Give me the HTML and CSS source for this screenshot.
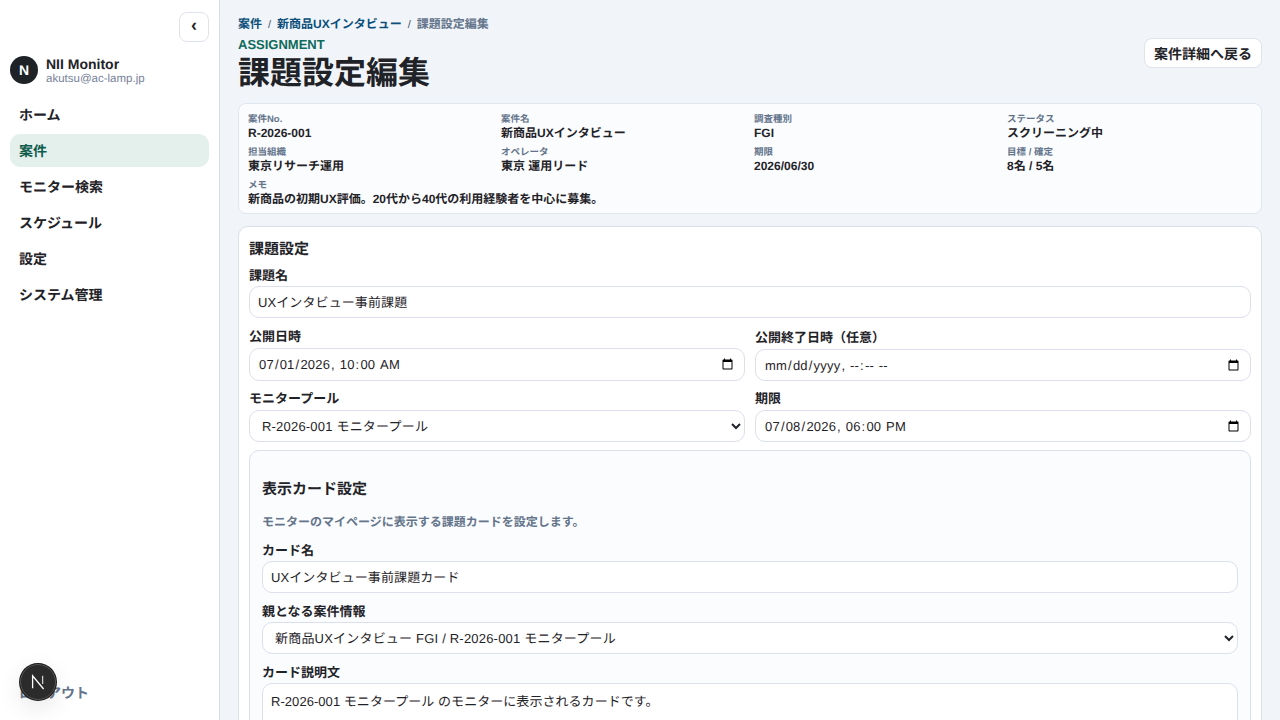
FILE: index.html
```html
<!DOCTYPE html>
<html lang="ja">
<head>
  <meta charset="utf-8"/>
  <title>課題設定編集</title>
  <link rel="stylesheet" href="styles.css">
</head>
<body>
  <aside class="sidebar">
    <div class="collapse-row">
      <button class="collapse-btn">‹</button>
    </div>
    <div class="brand">
      <div class="avatar">N</div>
      <div>
        <div class="brand-name">NII Monitor</div>
        <div class="brand-mail">akutsu@ac-lamp.jp</div>
      </div>
    </div>
    <nav class="nav">
      <a class="nav-item">ホーム</a>
      <a class="nav-item active">案件</a>
      <a class="nav-item">モニター検索</a>
      <a class="nav-item">スケジュール</a>
      <a class="nav-item">設定</a>
      <a class="nav-item">システム管理</a>
    </nav>
    <a class="logout">ログアウト</a>
    <div class="next-badge">
      <svg width="16" height="16" viewBox="0 0 16 16" fill="none">
        <path d="M2.6 14.2V1.8L13.6 15" stroke="#fff" stroke-width="1.3"/>
        <path d="M12.6 1.8V10" stroke="#ccc" stroke-width="1.3"/>
      </svg>
    </div>
  </aside>

  <main class="main">
    <div class="crumbs">
      <a>案件</a><span class="sep">/</span><a>新商品UXインタビュー</a><span class="sep">/</span><span class="crumb-now">課題設定編集</span>
    </div>
    <header class="page-head">
      <div>
        <div class="eyebrow">ASSIGNMENT</div>
        <h1>課題設定編集</h1>
      </div>
      <button class="back-btn">案件詳細へ戻る</button>
    </header>

    <section class="summary">
      <div class="summary-item"><div class="summary-label">案件No.</div><div class="summary-value">R-2026-001</div></div>
      <div class="summary-item"><div class="summary-label">案件名</div><div class="summary-value">新商品UXインタビュー</div></div>
      <div class="summary-item"><div class="summary-label">調査種別</div><div class="summary-value">FGI</div></div>
      <div class="summary-item"><div class="summary-label">ステータス</div><div class="summary-value">スクリーニング中</div></div>
      <div class="summary-item"><div class="summary-label">担当組織</div><div class="summary-value">東京リサーチ運用</div></div>
      <div class="summary-item"><div class="summary-label">オペレータ</div><div class="summary-value">東京 運用リード</div></div>
      <div class="summary-item"><div class="summary-label">期限</div><div class="summary-value">2026/06/30</div></div>
      <div class="summary-item"><div class="summary-label">目標 / 確定</div><div class="summary-value">8名 / 5名</div></div>
      <div class="summary-item wide"><div class="summary-label">メモ</div><div class="summary-value">新商品の初期UX評価。20代から40代の利用経験者を中心に募集。</div></div>
    </section>

    <section class="panel">
      <h2>課題設定</h2>
      <div class="field">
        <label>課題名</label>
        <input class="control" type="text" value="UXインタビュー事前課題">
      </div>
      <div class="two-col">
        <div class="field">
          <label>公開日時</label>
          <input class="control date" type="datetime-local" value="2026-07-01T10:00">
        </div>
        <div class="field field-end">
          <label>公開終了日時（任意）</label>
          <input class="control spaced" type="datetime-local">
        </div>
        <div class="field">
          <label>モニタープール</label>
          <select class="control select spaced"><option>R-2026-001 モニタープール</option></select>
        </div>
        <div class="field">
          <label>期限</label>
          <input class="control spaced" type="datetime-local" value="2026-07-08T18:00">
        </div>
      </div>

      <div class="card-box">
        <h3>表示カード設定</h3>
        <p class="hint">モニターのマイページに表示する課題カードを設定します。</p>
        <div class="field">
          <label>カード名</label>
          <input class="control" type="text" value="UXインタビュー事前課題カード">
        </div>
        <div class="field">
          <label>親となる案件情報</label>
          <select class="control select spaced"><option>新商品UXインタビュー FGI / R-2026-001 モニタープール</option></select>
        </div>
        <div class="field">
          <label>カード説明文</label>
          <textarea class="control area" rows="4">R-2026-001 モニタープール のモニターに表示されるカードです。</textarea>
        </div>
      </div>
    </section>
  </main>
</body>
</html>
```

FILE: styles.css
```css
* {
  box-sizing: border-box;
}
html, body {
  height: 100%;
  overflow: hidden;
}
body {
  margin: 0;
  display: flex;
  font-family: "Liberation Sans", "Noto Sans CJK JP", sans-serif;
  font-size: 13px;
  color: #1f2328;
  background-color: #f1f5f9;
  text-rendering: geometricPrecision;
}

/* sidebar */
.sidebar {
  position: relative;
  width: 220px;
  height: 720px;
  flex-shrink: 0;
  display: flex;
  flex-direction: column;
  padding: 12px 10px 17px;
  background-color: #fff;
  border-right: 1px solid #d5dde7;
}
.collapse-row {
  display: flex;
  justify-content: flex-end;
}
.collapse-btn {
  width: 30px;
  height: 30px;
  padding: 0 0 3px;
  background: #fff;
  border: 1px solid #dfe3ec;
  border-radius: 8px;
  font-family: inherit;
  font-size: 18px;
  font-weight: 700;
  color: #1f2328;
  text-rendering: inherit;
}
.brand {
  display: flex;
  align-items: flex-start;
  gap: 8px;
  margin-top: 14px;
}
.avatar {
  width: 28px;
  height: 28px;
  border-radius: 50%;
  background-color: #1f2328;
  color: #fff;
  font-size: 14px;
  font-weight: 700;
  display: flex;
  align-items: center;
  justify-content: center;
}
.brand-name {
  font-size: 14px;
  font-weight: 700;
  line-height: 16px;
}
.brand-mail {
  font-size: 11.5px;
  line-height: 14px;
  color: #76829a;
}
.nav {
  display: flex;
  flex-direction: column;
  gap: 3px;
  margin-top: 12px;
}
.nav-item {
  height: 33px;
  line-height: 35px;
  padding: 0 9px;
  border-radius: 10px;
  font-size: 14px;
  font-weight: 700;
}
.nav-item.active {
  background-color: #e3f0ec;
  color: #0f5c4d;
}
.logout {
  margin-top: auto;
  padding-left: 9px;
  font-size: 14px;
  font-weight: 700;
  color: #64748b;
}
.next-badge {
  position: absolute;
  left: 20px;
  top: 664px;
  width: 36px;
  height: 36px;
  border-radius: 50%;
  background-color: #2b2b2b;
  border: 1px solid #555;
  box-shadow: 0 0 0 1px #1a1a1a, 0 8px 24px rgba(0,0,0,0.1);
  display: flex;
  align-items: center;
  justify-content: center;
}

/* main */
.main {
  flex: 1;
  min-width: 0;
  padding: 16px 18px 0;
}
.crumbs {
  font-size: 12px;
  font-weight: 700;
  line-height: 16px;
  color: #0b4f7a;
}
.sep {
  margin: 0 6px;
  font-weight: 400;
  font-size: 11px;
  color: #475569;
}
.crumb-now {
  color: #64748b;
}
.page-head {
  display: flex;
  justify-content: space-between;
  align-items: flex-start;
  margin-top: 5px;
}
.eyebrow {
  font-size: 13px;
  font-weight: 700;
  line-height: 14px;
  color: #0f6b5c;
}
h1 {
  margin: 0;
  font-size: 32px;
  line-height: 42px;
}
.back-btn {
  padding: 1px 9px 0;
  height: 30px;
  background: #fff;
  border: 1px solid #dfe3ec;
  border-radius: 8px;
  font-family: inherit;
  font-size: 14px;
  font-weight: 700;
  color: #1f2328;
  text-rendering: inherit;
}
.summary {
  display: grid;
  grid-template-columns: repeat(4, 1fr);
  column-gap: 8px;
  margin-top: 9px;
  height: 111px;
  padding: 10px 9px 7px;
  background-color: #fbfcfe;
  border: 1px solid #e1e7ef;
  border-radius: 8px;
}
.summary-item {
  height: 33px;
}
.summary-item.wide {
  grid-column: 1 / -1;
}
.summary-label {
  font-size: 9.5px;
  font-weight: 700;
  line-height: 12px;
  color: #64748b;
}
.summary-value {
  font-size: 12px;
  font-weight: 700;
  line-height: 15px;
}
.panel {
  margin-top: 12px;
  padding: 13px 10px;
  background-color: #fff;
  border: 1px solid #d9e0ea;
  border-radius: 10px;
}
h2 {
  margin: 0 0 8px;
  font-size: 15px;
  line-height: 20px;
}
.field label {
  display: block;
  font-size: 13px;
  font-weight: 700;
  line-height: 16px;
  margin-bottom: 2px;
}
.control {
  display: block;
  width: 100%;
  height: 32px;
  padding: 0 8px;
  background-color: #fff;
  border: 1px solid #dcdfec;
  border-radius: 10px;
  font-family: inherit;
  font-size: 13px;
  letter-spacing: 0.1px;
  color: #1f2328;
  text-rendering: inherit;
}
.control[type="text"] {
  padding-bottom: 2px;
}
.date,
.spaced {
  letter-spacing: 0.2px;
}
.select {
  padding-left: 8px;
}
.area {
  height: 80px;
  padding: 7px 8px;
  letter-spacing: 0.05px;
  resize: none;
}
.two-col {
  display: grid;
  grid-template-columns: 1fr 1fr;
  column-gap: 10px;
  row-gap: 10px;
  margin-top: 11px;
}
.two-col .field label {
  margin-bottom: 3px;
}
.two-col .date {
  height: 33px;
}
.field-end {
  display: flex;
  flex-direction: column;
  justify-content: flex-end;
}
.card-box {
  margin-top: 8px;
  padding: 29px 12px 12px;
  background-color: #fbfcfe;
  border: 1px solid #d9e0ea;
  border-radius: 10px;
}
h3 {
  margin: 0 0 14px;
  font-size: 15px;
  line-height: 20px;
}
.hint {
  margin: 0 0 13px;
  font-size: 12px;
  font-weight: 700;
  line-height: 16px;
  color: #64748b;
}
.card-box .field {
  margin-top: 11px;
}
```
